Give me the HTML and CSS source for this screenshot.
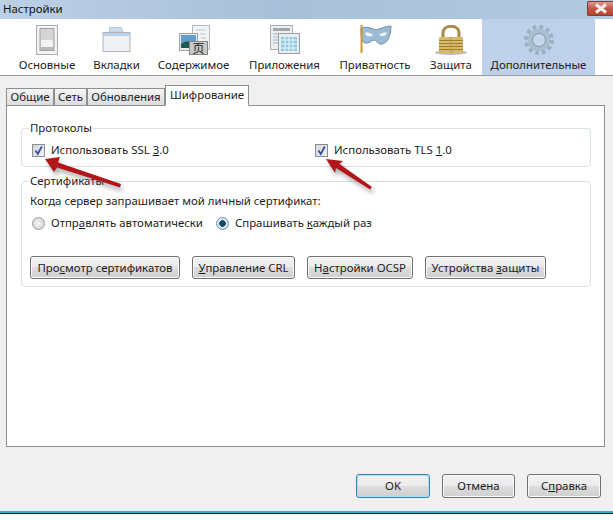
FILE: index.html
```html
<!DOCTYPE html>
<html lang="ru">
<head>
<meta charset="utf-8">
<title>Настройки</title>
<link rel="stylesheet" href="styles.css">
</head>
<body>
<div class="window">
  <header class="titlebar">
    <span class="title">Настройки</span>
    <span class="close"><svg width="16" height="11" viewBox="0 0 16 11"><path d="M3 1.500 L13 9.500 M13 1.500 L3 9.500" stroke="#f4efee" stroke-width="3" fill="none"/></svg></span>
  </header>
  <nav class="toolbar">
    <div class="tool">
      <svg class="ico" width="44" height="40" viewBox="0 0 44 40"><rect x="11.500" y="0.500" width="21" height="29" fill="#f4f4f4" stroke="#a9a9a9"/><rect x="15" y="3.500" width="14" height="22" fill="#d4d4d4" stroke="#a2a2a2"/><rect x="16" y="15" width="12" height="10" fill="#f2f2f2"/><rect x="16" y="22" width="12" height="3" fill="#b8b8b8"/></svg>
      <span>Основные</span>
    </div>
    <div class="tool">
      <svg class="ico" width="44" height="40" viewBox="0 0 44 40"><path d="M14.500 7 V2.500 H26 L28 7 Z" fill="#cfdcf0" stroke="#b7c5d8"/><rect x="8" y="7.500" width="27" height="19" fill="#eef0f3" stroke="#adb2b8"/><rect x="8.500" y="8" width="26" height="3" fill="#bcd0ee"/></svg>
      <span>Вкладки</span>
    </div>
    <div class="tool">
      <svg class="ico" width="44" height="40" viewBox="0 0 44 40"><rect x="20.500" y="0.500" width="17" height="24" fill="#f2f3f5" stroke="#b4b8bc"/><path d="M24 5h10M28 9h6M29 13h5" stroke="#b9c9da"/><rect x="7.500" y="8.500" width="18" height="17" fill="#e8eaec" stroke="#9ea3a8"/><rect x="9" y="10" width="15" height="13" fill="#5f9fc9"/><path d="M9 19 Q15 14 24 18 V23 H9 Z" fill="#1f5a52"/><rect x="17.500" y="16.500" width="18" height="13" fill="#c9c9c9" stroke="#868686"/><text x="26.500" y="28" class="glyph">页</text></svg>
      <span>Содержимое</span>
    </div>
    <div class="tool">
      <svg class="ico" width="44" height="40" viewBox="0 0 44 40"><rect x="7.500" y="0.500" width="22" height="24" fill="#eceef0" stroke="#a9adb2"/><rect x="10" y="3" width="17" height="3" fill="#9fa6ad"/><path d="M10 9h5M10 12h5M10 15h5M10 18h5" stroke="#9fb4c8"/><rect x="15.500" y="8.500" width="21" height="20" fill="#e9edf0" stroke="#9aa0a5"/><rect x="18" y="12" width="16" height="14" fill="#8fcbe2"/><path d="M18 15h16M18 19h16M18 23h16M22 12v14M26 12v14M30 12v14" stroke="#eef5f8"/></svg>
      <span>Приложения</span>
    </div>
    <div class="tool">
      <svg class="ico" width="44" height="40" viewBox="0 0 44 40"><path d="M8 3 C15 1 20 4 23 5 C27 4 33 1 38 1 C38 11 34 20 27 19 C24 18 24 15 21 15 C18 16 14 20 10 17 C8 13 8 8 8 3 Z" fill="#9cbcd6" stroke="#6f8ea9"/><path d="M12 8 C14 7 18 8 20 10 C17 12 13 12 12 8 Z M26 10 C28 8 32 7 34 8 C33 11 28 12 26 10 Z" fill="#f6f9fc"/><path d="M8.500 0 V28" stroke="#c79a22" stroke-width="2"/></svg>
      <span>Приватность</span>
    </div>
    <div class="tool">
      <svg class="ico" width="44" height="40" viewBox="0 0 44 40"><ellipse cx="22" cy="27.500" rx="16" ry="2.500" fill="#bdbdbd"/><path d="M14 12 V8 C14 -1 30 -1 30 8 V12" fill="none" stroke="#a98a4a" stroke-width="3"/><rect x="10" y="12" width="24" height="16" rx="1" fill="#d8ba6b"/><path d="M10 15.500h24M10 18.500h24M10 21.500h24M10 24.500h24" stroke="#9c7c34"/><path d="M22 12v16" stroke="#b39549"/></svg>
      <span>Защита</span>
    </div>
    <div class="tool tool-active">
      <svg class="ico" width="44" height="40" viewBox="0 0 44 40"><circle cx="22" cy="15" r="12.500" fill="none" stroke="#9bb1c3" stroke-width="5" stroke-dasharray="3.600 2.945"/><circle cx="22" cy="15" r="9" fill="none" stroke="#a9bfcf" stroke-width="4.500"/><circle cx="22" cy="15" r="6.500" fill="#c6d6ec" stroke="#8299ab"/></svg>
      <span>Дополнительные</span>
    </div>
  </nav>
  <main class="content">
    <div class="tabs">
      <div class="tab tab-general">Общие</div>
      <div class="tab tab-net">Сеть</div>
      <div class="tab tab-upd">Обновления</div>
      <div class="tab tab-active">Шифрование</div>
    </div>
    <section class="panel">
      <fieldset class="group group-protocols">
        <legend>Протоколы</legend>
        <div class="proto-row">
          <label class="opt opt-ssl"><span class="check"><svg width="11" height="11" viewBox="0 0 11 11"><path d="M2.500 5.500 L4.800 9 L8.800 1.500" fill="none" stroke="#3c4f9a" stroke-width="1.800"/></svg></span><span>Использовать SSL <u>3</u>.0</span></label>
          <label class="opt"><span class="check"><svg width="11" height="11" viewBox="0 0 11 11"><path d="M2.500 5.500 L4.800 9 L8.800 1.500" fill="none" stroke="#3c4f9a" stroke-width="1.800"/></svg></span><span>Использовать TLS <u>1</u>.0</span></label>
        </div>
      </fieldset>
      <fieldset class="group group-certs">
        <legend>Сертификаты</legend>
        <p class="ask">Когда сервер запрашивает мой личный сертификат:</p>
        <div class="radio-row">
          <label class="opt opt-auto"><span class="radio"></span><span>Отпр<u>а</u>влять автоматически</span></label>
          <label class="opt"><span class="radio radio-on"></span><span>Спрашивать <u>к</u>аждый раз</span></label>
        </div>
        <div class="btn-row">
          <button class="btn btn-view">Про<u>с</u>мотр сертификатов</button>
          <button class="btn btn-crl"><u>У</u>правление CRL</button>
          <button class="btn btn-ocsp">Н<u>а</u>стройки OCSP</button>
          <button class="btn btn-dev">Устройства <u>з</u>ащиты</button>
        </div>
      </fieldset>
    </section>
    <footer class="footer">
      <button class="btn btn-dlg btn-ok">OK</button>
      <button class="btn btn-dlg btn-cancel">Отмена</button>
      <button class="btn btn-dlg">С<u>п</u>равка</button>
    </footer>
  </main>
  <div class="edge"></div>
  <svg class="arrows" width="613" height="520" viewBox="0 0 613 520">
    <defs><filter id="soft" x="-20%" y="-40%" width="140%" height="180%"><feGaussianBlur stdDeviation="2"/></filter></defs>
    <g fill="#555" opacity="0.45" filter="url(#soft)" transform="translate(2 4)">
      <path d="M45 159 L60 157 L58 162.500 L121 184 L120 187.500 L57 167.500 L54 172 Z"/>
      <path d="M326 159 L343 161 L339.500 164 L372 187 L370 189.500 L336 168 L335 173 Z"/>
    </g>
    <g fill="#b3161a">
      <path d="M45 159 L60 157 L58 162.500 L121 184 L120 187.500 L57 167.500 L54 172 Z"/>
      <path d="M326 159 L343 161 L339.500 164 L372 187 L370 189.500 L336 168 L335 173 Z"/>
    </g>
  </svg>
</div>
</body>
</html>
```

FILE: styles.css
```css
* { box-sizing: border-box; }
html, body { margin: 0; padding: 0; }
body { width: 613px; height: 520px; overflow: hidden; background: #fff; font: 11.4px/16px "Noto Sans", sans-serif; color: #1c1c1c; }
.window { position: relative; width: 613px; height: 520px; display: flex; flex-direction: column; }
.titlebar { height: 19px; flex: none; display: flex; align-items: flex-start; justify-content: space-between; padding-left: 3px; background: linear-gradient(90deg, #bcd0e6 0%, #a9c0da 45%, #b3c9e2 100%); }
.title { line-height: 18px; color: #111; }
.close { width: 26px; height: 15px; margin-top: 1px; display: flex; align-items: center; justify-content: center; background: linear-gradient(#dd9a8d, #c2574a 50%, #b8432f); border: 1px solid #7f3b36; border-right: 0; border-radius: 2px 0 0 2px; }
.toolbar { height: 57px; flex: none; display: grid; grid-template-columns: 76px 63px 91px 91px 90px 62px 113px; padding-left: 9px; background: #fff; border-bottom: 1px solid #9c9c9c; }
.tool { display: flex; flex-direction: column; align-items: center; white-space: nowrap; }
.tool span { line-height: 16px; margin-top: -8px; }
.ico { display: block; margin-top: 6px; flex: none; }
.tool-active { background: #bfd0ea; }
.glyph { font: 12px "Noto Sans CJK SC", sans-serif; text-anchor: middle; fill: #222; }
.content { flex: 1; min-height: 0; display: flex; flex-direction: column; background: #f0f0f0; padding: 9px 8px 0 6px; }
.tabs { display: flex; align-items: flex-end; height: 21px; margin-bottom: -1px; position: relative; z-index: 1; }
.tab { height: 18px; line-height: 15px; text-align: center; background: linear-gradient(#f5f5f5, #dcdcdc); border: 1px solid #8e8f8f; white-space: nowrap; }
.tab-general { width: 48px; }
.tab-net { width: 33px; }
.tab-upd { width: 78px; }
.tab-active { width: 84px; height: 21px; line-height: 18px; background: #fff; border-bottom-color: #fff; }
.panel { height: 342px; flex: none; background: #fff; border: 1px solid #8e8f8f; padding: 15px 13px 0 14px; }
.group { margin: 0; padding: 0 0 0 8px; border: 1px solid #d6e0e6; border-radius: 4px; min-width: 0; }
.group legend { margin-left: -1px; padding: 0 1px; line-height: 16px; }
.group-protocols { height: 47px; margin-top: -1px; }
.group-certs { height: 114px; margin-top: 6px; }
.proto-row { display: flex; padding-left: 2px; margin-top: 6px; }
.opt { display: flex; align-items: center; white-space: nowrap; height: 16px; }
.opt-ssl { width: 283px; }
.opt-auto { width: 184px; }
.check { width: 13px; height: 13px; margin: 1px 6px 0 0; flex: none; display: flex; align-items: center; justify-content: center; border: 1px solid #8a8f94; background: linear-gradient(135deg, #d2d6da, #f0f2f4); }
.radio { width: 13px; height: 13px; margin-right: 6px; flex: none; border-radius: 50%; border: 1px solid #9a9a9a; background: radial-gradient(circle, #f4f4f4, #cfcfcf); }
.radio-on { background: radial-gradient(circle, #14486f 0 3px, #d4e6f2 3.500px); border-color: #7b8c99; }
.ask { margin: 4px 0 0; height: 16px; }
.radio-row { display: flex; padding-left: 2px; margin-top: 6px; }
.btn-row { display: flex; gap: 12px; margin-top: 25px; }
.btn { height: 23px; padding: 0; font: inherit; color: inherit; border: 1px solid #707070; border-radius: 3px; background: linear-gradient(#f2f2f2 0%, #ebebeb 50%, #dddddd 50%, #cfcfcf 100%); box-shadow: inset 0 0 0 1px #fbfbfb; }
.btn-view { width: 150px; }
.btn-crl { width: 103px; }
.btn-ocsp { width: 106px; }
.btn-dev { width: 121px; }
.footer { display: flex; justify-content: flex-end; gap: 12px; margin-top: 27px; padding-right: 4px; }
.btn-dlg { width: 74px; height: 24px; }
.btn-cancel { width: 73px; }
.btn-ok { border-color: #3c7fb1; box-shadow: inset 0 0 0 1px #a7e3f5; }
.edge { flex: none; height: 3px; border-top: 2px solid #22b5d6; border-bottom: 1px solid #0b0b0b; margin-bottom: 6px; }
.arrows { position: absolute; left: 0; top: 0; pointer-events: none; }
```
